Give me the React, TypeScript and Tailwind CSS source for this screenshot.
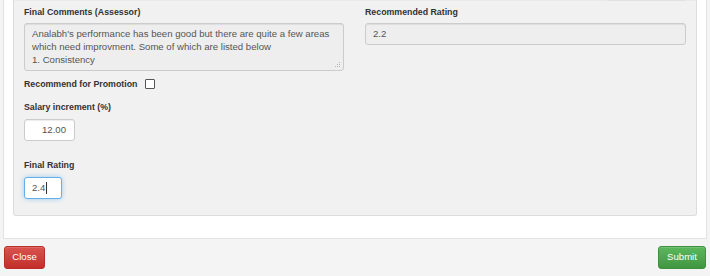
import React from "react";

export default function App() {
  return (
    <div
      className="w-[710px] h-[276px] bg-[#f4f4f4] overflow-hidden text-[#333]"
      style={{ fontFamily: '"Liberation Sans", Arial, sans-serif' }}
    >
      <div className="ml-[3px] w-[704px] bg-white border-x border-b border-[#e3e3e3] pl-[9px] pr-[9px] pb-[22px]">
        <div className="w-[684px] bg-[#f1f1f1] border-x border-b border-[#dcdcdc] rounded-b-[3px] px-[10px] pb-[16px] shadow-[inset_0_1px_1px_rgba(0,0,0,0.03)]">
          <div className="grid grid-cols-[320px_321px] gap-x-[21px]">
            <div className="flex flex-col">
              <div className="h-px" />
              <div className="mt-[6px] h-[11px] leading-[11px] text-[8.8px] font-bold">
                Final Comments (Assessor)
              </div>
              <div className="relative mt-[5px]">
                <textarea
                  readOnly
                  className="block h-[48px] w-[320px] resize-none bg-[#eeeeee] border border-[#cccccc] rounded-[3px] px-[7px] pt-[3px] text-[9.6px] leading-[13px] text-[#555] overflow-hidden outline-none shadow-[inset_0_1px_1px_rgba(0,0,0,0.075)]"
                  value={
                    "Analabh's performance has been good but there are quite a few areas which need improvment. Some of which are listed below\n1. Consistency"
                  }
                />
                <svg className="absolute right-[3px] bottom-[3px]" width="6" height="6" viewBox="0 0 6 6">
                  <rect x="4" y="0" width="1" height="1" fill="#b5b5b5" />
                  <rect x="2" y="2" width="1" height="1" fill="#b5b5b5" />
                  <rect x="4" y="2" width="1" height="1" fill="#b5b5b5" />
                  <rect x="0" y="4" width="1" height="1" fill="#b5b5b5" />
                  <rect x="2" y="4" width="1" height="1" fill="#b5b5b5" />
                  <rect x="4" y="4" width="1" height="1" fill="#b5b5b5" />
                </svg>
              </div>
            </div>
            <div className="flex flex-col">
              <div className="h-px w-[79px] ml-auto bg-[#e2e2e2]" />
              <div className="mt-[6px] h-[11px] leading-[11px] text-[8.8px] font-bold">
                Recommended Rating
              </div>
              <div className="mt-[5px] h-[22px] w-[321px] bg-[#eeeeee] border border-[#cccccc] rounded-[3px] px-[7px] flex items-center text-[9.6px] text-[#555] shadow-[inset_0_1px_1px_rgba(0,0,0,0.075)]">
                2.2
              </div>
            </div>
          </div>

          <div className="mt-[7px] h-[12px] flex items-center">
            <span className="text-[8.8px] font-bold leading-[12px]">Recommend for Promotion</span>
            <span className="ml-[8px] w-[10px] h-[10px] border border-[#555] bg-white rounded-[1px]" />
          </div>

          <div className="mt-[12px] h-[11px] leading-[11px] text-[8.8px] font-bold">
            Salary increment (%)
          </div>
          <div className="mt-[6px] h-[22px] w-[51px] bg-white border border-[#cccccc] rounded-[3px] pr-[8px] flex items-center justify-end text-[9.6px] text-[#555] shadow-[inset_0_1px_1px_rgba(0,0,0,0.075)]">
            12.00
          </div>

          <div className="mt-[19px] h-[11px] leading-[11px] text-[8.8px] font-bold">
            Final Rating
          </div>
          <div className="mt-[6px] h-[22px] w-[38px] bg-white border border-[#66afe9] rounded-[3px] pl-[7px] flex items-center text-[9.6px] text-[#555] shadow-[0_0_5px_rgba(102,175,233,0.6)]">
            <span>2.4</span>
            <span className="ml-px w-px h-[12px] bg-[#333]" />
          </div>
        </div>
      </div>

      <div className="flex justify-between items-start mt-[7px] px-[4px]">
        <button className="w-[41px] h-[23px] rounded-[3px] border border-[#b92c28] bg-gradient-to-b from-[#d9534f] to-[#c12e2a] text-white text-[9.6px] flex items-center justify-center shadow-[inset_0_1px_0_rgba(255,255,255,0.15)]">
          Close
        </button>
        <button className="w-[48px] h-[23px] rounded-[3px] border border-[#3e8f3e] bg-gradient-to-b from-[#5cb85c] to-[#419641] text-white text-[9.6px] flex items-center justify-center shadow-[inset_0_1px_0_rgba(255,255,255,0.15)]">
          Submit
        </button>
      </div>
    </div>
  );
}
